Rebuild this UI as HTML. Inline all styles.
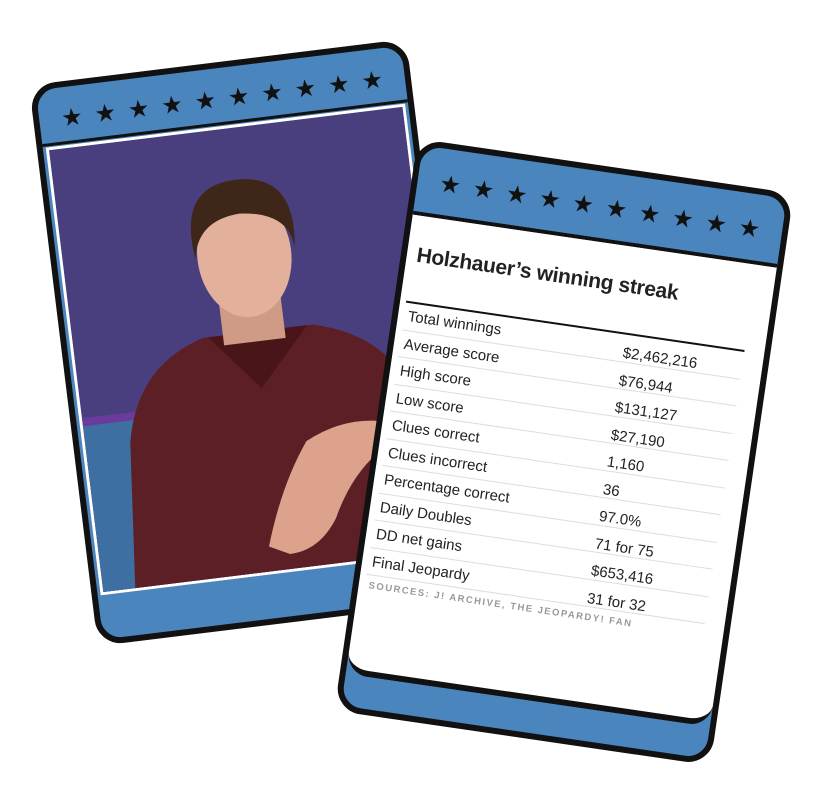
<!DOCTYPE html>
<html><head><meta charset="utf-8"><style>
html,body{margin:0;padding:0;background:#fff;width:826px;height:792px;overflow:hidden;font-family:"Liberation Sans",sans-serif;}
.card{position:absolute;box-sizing:border-box;border:6px solid #111;border-radius:26px;background:#4a85bd;overflow:hidden;}
.stars{position:absolute;left:0;right:0;display:flex;justify-content:space-between;padding:0 22px;font-size:24px;color:#111;line-height:1;}
#left{left:62px;top:60px;width:380px;height:565px;transform:rotate(-7deg);}
#left .photo{position:absolute;left:3px;right:3px;top:58px;bottom:44px;border:3px solid #fff;background:#4b3f7c;overflow:hidden;}
#right{left:374px;top:163px;width:380px;height:578px;transform:rotate(8.3deg);}
#right .panel{position:absolute;left:0;right:0;top:66px;height:458px;background:#fff;border-bottom:6px solid #111;border-radius:0 0 22px 22px;border-top:4px solid #111;}
h1{position:absolute;left:10px;top:28px;margin:0;font-size:21px;font-weight:bold;color:#222;letter-spacing:-0.3px;}
.tbl{position:absolute;left:6px;right:20px;top:86px;border-top:2px solid #111;}
.row{height:26.5px;border-bottom:1px solid #ddd;position:relative;font-size:15px;color:#222;}
.row span{position:absolute;left:4px;top:5px;}
.row b{position:absolute;left:222px;top:10px;font-weight:normal;}
.src{position:absolute;left:10px;top:368px;font-size:9.5px;letter-spacing:1.5px;color:#999;font-weight:bold;}
</style></head><body>
<div class="card" id="left">
  <div class="stars" style="top:20px"><span>★</span><span>★</span><span>★</span><span>★</span><span>★</span><span>★</span><span>★</span><span>★</span><span>★</span><span>★</span></div>
  <div style="position:absolute;left:0;right:0;top:54px;height:3px;background:#111"></div>
  <div class="photo">
    <svg width="370" height="470" viewBox="0 0 370 470">
      <rect width="370" height="470" fill="#4a3f7e"/>
      <rect x="0" y="270" width="70" height="8" fill="#6a3a9c"/>
      <rect x="0" y="278" width="60" height="200" fill="#3d6fa3"/>
      <path d="M30 470 L45 300 Q60 225 130 205 L240 205 Q320 225 335 300 L345 470 Z" fill="#5c1f25"/>
      <path d="M135 205 L182 262 L235 205 Z" fill="#4a1519"/>
      <rect x="150" y="165" width="62" height="50" fill="#cf9a86"/>
      <ellipse cx="181" cy="128" rx="47" ry="62" fill="#e3b09c"/>
      <path d="M132 126 Q122 52 181 52 Q242 52 232 126 Q230 90 181 86 Q138 88 132 126 Z" fill="#3e2618"/>
      <path d="M170 420 Q190 360 220 320 Q260 300 300 310 Q310 325 290 340 Q260 360 240 400 Q220 430 190 430 Z" fill="#dca28c"/>
    </svg>
  </div>
</div>
<div class="card" id="right">
  <div class="stars" style="top:24px"><span>★</span><span>★</span><span>★</span><span>★</span><span>★</span><span>★</span><span>★</span><span>★</span><span>★</span><span>★</span></div>
  <div class="panel">
    <h1>Holzhauer’s winning streak</h1>
    <div class="tbl">
      <div class="row"><span>Total winnings</span><b>$2,462,216</b></div>
      <div class="row"><span>Average score</span><b>$76,944</b></div>
      <div class="row"><span>High score</span><b>$131,127</b></div>
      <div class="row"><span>Low score</span><b>$27,190</b></div>
      <div class="row"><span>Clues correct</span><b>1,160</b></div>
      <div class="row"><span>Clues incorrect</span><b>36</b></div>
      <div class="row"><span>Percentage correct</span><b>97.0%</b></div>
      <div class="row"><span>Daily Doubles</span><b>71 for 75</b></div>
      <div class="row"><span>DD net gains</span><b>$653,416</b></div>
      <div class="row"><span>Final Jeopardy</span><b>31 for 32</b></div>
    </div>
    <div class="src">SOURCES: J! ARCHIVE, THE JEOPARDY! FAN</div>
  </div>
</div>
</body></html>
